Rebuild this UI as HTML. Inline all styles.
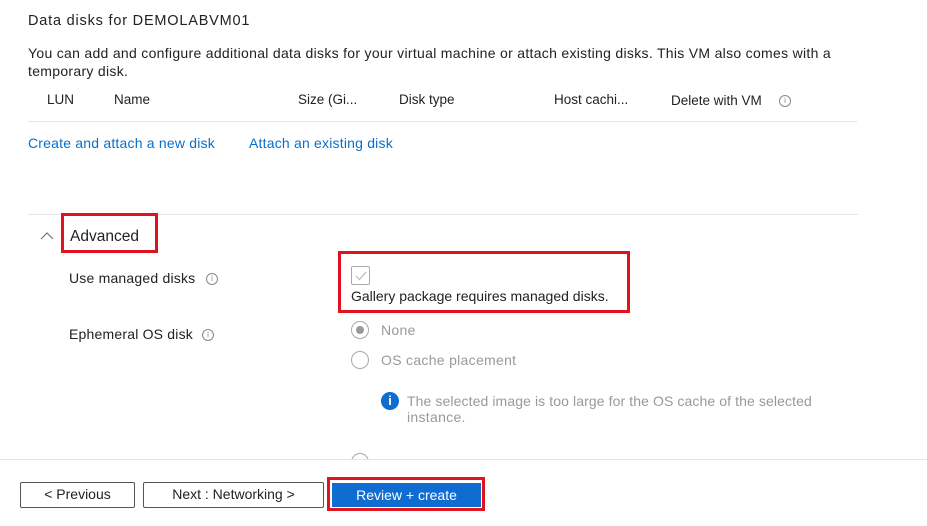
<!DOCTYPE html>
<html><head><style>
body{margin:0;width:927px;height:525px;background:#fff;font-family:"Liberation Sans",sans-serif;color:#222;font-size:14px;letter-spacing:.3px;position:relative;overflow:hidden}
.a{position:absolute;white-space:nowrap}
.h{font-size:13.5px;letter-spacing:0}
.g{color:#999}
.l{color:#0a6fc9}
.hr{position:absolute;height:1px;background:#e5e5e5}
.info{position:absolute;width:10px;height:10px;border:1px solid #888;border-radius:50%;font-size:8px;line-height:10px;text-align:center;color:#888;letter-spacing:0}
.red{position:absolute;border:3px solid #e0141e;box-sizing:border-box}
.btn{position:absolute;border:1px solid #555;box-sizing:border-box;text-align:center;line-height:23px;font-size:14px;border-radius:2px;letter-spacing:0}
.radio{position:absolute;width:18px;height:18px;border:1px solid #aaa;border-radius:50%;box-sizing:border-box}
</style></head><body>
<div class="a" style="left:28px;top:13px;font-size:14.5px;letter-spacing:.8px">Data disks for DEMOLABVM01</div>
<div class="a" style="left:28px;top:45px;letter-spacing:.3px">You can add and configure additional data disks for your virtual machine or attach existing disks. This VM also comes with a</div>
<div class="a" style="left:28px;top:63px">temporary disk.</div>
<div class="a h" style="left:47px;top:92px">LUN</div>
<div class="a h" style="left:114px;top:92px">Name</div>
<div class="a h" style="left:298px;top:92px">Size (Gi...</div>
<div class="a h" style="left:399px;top:92px">Disk type</div>
<div class="a h" style="left:554px;top:92px">Host cachi...</div>
<div class="a h" style="left:671px;top:93px">Delete with VM</div>
<div class="info" style="left:779px;top:95px">i</div>
<div class="hr" style="left:28px;top:121px;width:829px"></div>
<div class="a l" style="left:28px;top:135px;letter-spacing:.2px">Create and attach a new disk</div>
<div class="a l" style="left:249px;top:135px;letter-spacing:.2px">Attach an existing disk</div>
<div class="hr" style="left:28px;top:214px;width:830px"></div>
<svg class="a" style="left:40px;top:231px" width="14" height="10"><path d="M1 8 L7 2 L13 8" fill="none" stroke="#777" stroke-width="1.2"/></svg>
<div class="a" style="left:70px;top:228px;font-size:15.5px;letter-spacing:0">Advanced</div>
<div class="red" style="left:61px;top:213px;width:97px;height:40px"></div>
<div class="a" style="left:69px;top:270px;letter-spacing:.2px">Use managed disks</div>
<div class="info" style="left:206px;top:273px">i</div>
<div class="a" style="left:69px;top:326px;letter-spacing:.2px">Ephemeral OS disk</div>
<div class="info" style="left:202px;top:329px">i</div>
<div class="red" style="left:338px;top:251px;width:292px;height:62px"></div>
<div class="a" style="left:351px;top:266px;width:19px;height:19px;border:1px solid #aaa;box-sizing:border-box;border-radius:2px"></div>
<svg class="a" style="left:354px;top:270px" width="14" height="12"><path d="M2 6 L5.5 9.5 L12 2" fill="none" stroke="#bbb" stroke-width="1.2"/></svg>
<div class="a" style="left:351px;top:288px;letter-spacing:0">Gallery package requires managed disks.</div>
<div class="radio" style="left:351px;top:321px"></div>
<div class="a" style="left:356px;top:326px;width:8px;height:8px;border-radius:50%;background:#999"></div>
<div class="a g" style="left:381px;top:322px">None</div>
<div class="radio" style="left:351px;top:351px"></div>
<div class="a g" style="left:381px;top:352px;letter-spacing:.3px">OS cache placement</div>
<div class="a" style="left:381px;top:392px;width:18px;height:18px;border-radius:50%;background:#0f6cd1;color:#fff;font-weight:bold;text-align:center;line-height:18px;font-size:13px;letter-spacing:0">i</div>
<div class="a g" style="left:407px;top:393px;letter-spacing:.1px">The selected image is too large for the OS cache of the selected</div>
<div class="a g" style="left:407px;top:409px">instance.</div>
<div class="radio" style="left:351px;top:453px"></div>
<div class="a" style="left:0;top:459px;width:927px;height:66px;background:#fff;border-top:1px solid #e5e5e5"></div>
<div class="btn" style="left:20px;top:482px;width:115px;height:26px">&lt; Previous</div>
<div class="btn" style="left:143px;top:482px;width:181px;height:26px">Next : Networking &gt;</div>
<div class="a" style="left:332px;top:483px;width:149px;height:24px;background:#0f6cd1;color:#fff;text-align:center;line-height:24px;letter-spacing:0">Review + create</div>
<div class="red" style="left:327px;top:477px;width:158px;height:34px"></div>
</body></html>
